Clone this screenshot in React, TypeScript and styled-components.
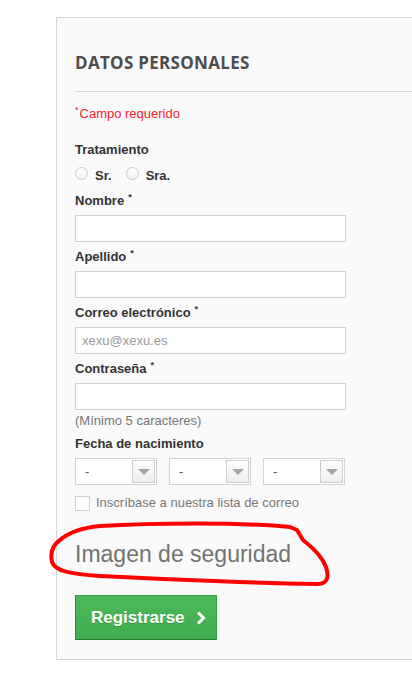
import React from "react";
import styled, { createGlobalStyle } from "styled-components";

const GlobalStyle = createGlobalStyle`
  html, body { margin: 0; padding: 0; background: #ffffff; }
  body { font-family: "Liberation Sans", Arial, sans-serif; }
  * { box-sizing: border-box; }
`;

const Page = styled.div`
  position: relative;
  width: 412px;
  height: 674px;
  overflow: hidden;
  padding: 17px 0 0 56px;
`;

const Panel = styled.div`
  background: #fafafa;
  border: 1px solid #d6d6d6;
  border-right: none;
  padding: 33px 0 19px 18px;
  display: flex;
  flex-direction: column;
  align-items: flex-start;
`;

const Title = styled.h2`
  margin: 0;
  font-family: "Open Sans", sans-serif;
  font-weight: 700;
  font-size: 17px;
  letter-spacing: 0.3px;
  line-height: 24px;
  color: #4d4d4d;
`;

const Divider = styled.div`
  align-self: stretch;
  height: 1px;
  background: #d8d8d8;
  margin-top: 16px;
`;

const Required = styled.div`
  margin-top: 13px;
  font-size: 13px;
  line-height: 18px;
  color: #f5222d;
`;

const Star = styled.sup<{ $red?: boolean }>`
  font-size: 9px;
  line-height: 0;
  vertical-align: 5px;
  color: ${(p) => (p.$red ? "#f5222d" : "#333")};
  margin-left: ${(p) => (p.$red ? "0" : "4px")};
  margin-right: ${(p) => (p.$red ? "1px" : "0")};
`;

const Label = styled.div<{ $mt?: number; $mb?: number }>`
  margin-top: ${(p) => p.$mt ?? 6}px;
  margin-bottom: ${(p) => p.$mb ?? 5}px;
  font-size: 13px;
  line-height: 18px;
  font-weight: 700;
  color: #333;
`;

const RadioRow = styled.div`
  display: flex;
  align-items: flex-start;
  gap: 14px;
  margin-top: 8px;
  height: 18px;
`;

const RadioOption = styled.label`
  display: flex;
  align-items: flex-start;
  gap: 7px;
  font-size: 13px;
  line-height: 18px;
  font-weight: 700;
  color: #333;
`;

const RadioCircle = styled.span`
  width: 13px;
  height: 13px;
  border-radius: 50%;
  border: 1px solid #c9c9c9;
  background: linear-gradient(#ffffff, #f1f1f1);
`;

const Input = styled.div`
  width: 271px;
  height: 27px;
  background: #ffffff;
  border: 1px solid #cfcfcf;
  display: flex;
  align-items: center;
  padding: 0 6px;
  font-size: 13px;
  color: #9a9a9a;
`;

const Hint = styled.div`
  margin-top: 2px;
  font-size: 13px;
  line-height: 18px;
  color: #777;
`;

const SelectRow = styled.div`
  display: flex;
  gap: 12px;
`;

const Select = styled.div`
  width: 82px;
  height: 27px;
  background: #ffffff;
  border: 1px solid #d3d3d3;
  display: flex;
  align-items: center;
  padding: 0 1px 0 9px;
  font-size: 13px;
  color: #555;
`;

const ArrowBox = styled.span`
  margin-left: auto;
  width: 23px;
  height: 23px;
  border: 1px solid #cdcdcd;
  background: linear-gradient(#fdfdfd, #efefef);
  display: flex;
  align-items: center;
  justify-content: center;
`;

const CheckRow = styled.label`
  margin-top: 9px;
  display: flex;
  align-items: center;
  gap: 6px;
  font-size: 13px;
  line-height: 18px;
  color: #777;
`;

const CheckBox = styled.span`
  width: 15px;
  height: 15px;
  border: 1px solid #d0d0d0;
  background: #ffffff;
`;

const Captcha = styled.div`
  margin-top: 29px;
  font-size: 23px;
  line-height: 26px;
  color: #727272;
`;

const Button = styled.button`
  margin-top: 28px;
  width: 142px;
  height: 45px;
  padding: 0 0 0 15px;
  display: flex;
  align-items: center;
  gap: 11px;
  background: linear-gradient(#4cb85a, #42ad50);
  border: 1px solid #3a9c46;
  border-bottom-color: #227a30;
  border-left-color: #2e8a3b;
  color: #ffffff;
  font-family: "Liberation Sans", Arial, sans-serif;
  font-weight: 700;
  font-size: 17px;
  text-shadow: 0 1px 0 rgba(0, 60, 10, 0.25);
  cursor: pointer;
`;

const Annotation = styled.svg`
  position: absolute;
  left: 0;
  top: 0;
  pointer-events: none;
`;

const Field = ({ label, mt, children }: { label: string; mt?: number; children: React.ReactNode }) => (
  <>
    <Label $mt={mt}>
      {label}
      <Star>*</Star>
    </Label>
    {children}
  </>
);

const Triangle = () => (
  <svg width="12" height="6" viewBox="0 0 12 6">
    <path d="M0 0 L12 0 L6 6 Z" fill="#a5a5a5" />
  </svg>
);

export default function App() {
  return (
    <>
      <GlobalStyle />
      <Page>
        <Panel>
          <Title>DATOS PERSONALES</Title>
          <Divider />
          <Required>
            <Star $red>*</Star>Campo requerido
          </Required>
          <Label $mt={18} $mb={0}>Tratamiento</Label>
          <RadioRow>
            <RadioOption>
              <RadioCircle />
              Sr.
            </RadioOption>
            <RadioOption>
              <RadioCircle />
              Sra.
            </RadioOption>
          </RadioRow>
          <Field label="Nombre" mt={7}>
            <Input />
          </Field>
          <Field label="Apellido">
            <Input />
          </Field>
          <Field label="Correo electrónico">
            <Input>xexu@xexu.es</Input>
          </Field>
          <Field label="Contraseña">
            <Input />
          </Field>
          <Hint>(Mínimo 5 caracteres)</Hint>
          <Label $mt={5}>Fecha de nacimiento</Label>
          <SelectRow>
            {[0, 1, 2].map((i) => (
              <Select key={i}>
                -
                <ArrowBox>
                  <Triangle />
                </ArrowBox>
              </Select>
            ))}
          </SelectRow>
          <CheckRow>
            <CheckBox />
            Inscríbase a nuestra lista de correo
          </CheckRow>
          <Captcha>Imagen de seguridad</Captcha>
          <Button>
            Registrarse
            <svg width="10" height="14" viewBox="0 0 10 14">
              <path d="M2 1.5 L7.5 7 L2 12.5" fill="none" stroke="#fff" strokeWidth="3" />
            </svg>
          </Button>
        </Panel>
        <Annotation width="412" height="674" viewBox="0 0 412 674">
          <path
            d="M 60 540 C 68 533, 80 528, 100 526 C 150 523, 240 522, 290 527 L 297 530 L 303 540 C 312 547, 322 556, 326 567 C 329 576, 328 584, 318 584 C 260 583, 160 579, 100 576 C 70 574, 55 571, 52 562 C 50 553, 53 545, 60 540 Z"
            fill="none"
            stroke="#ff0000"
            strokeWidth="4"
            strokeLinejoin="round"
          />
        </Annotation>
      </Page>
    </>
  );
}
